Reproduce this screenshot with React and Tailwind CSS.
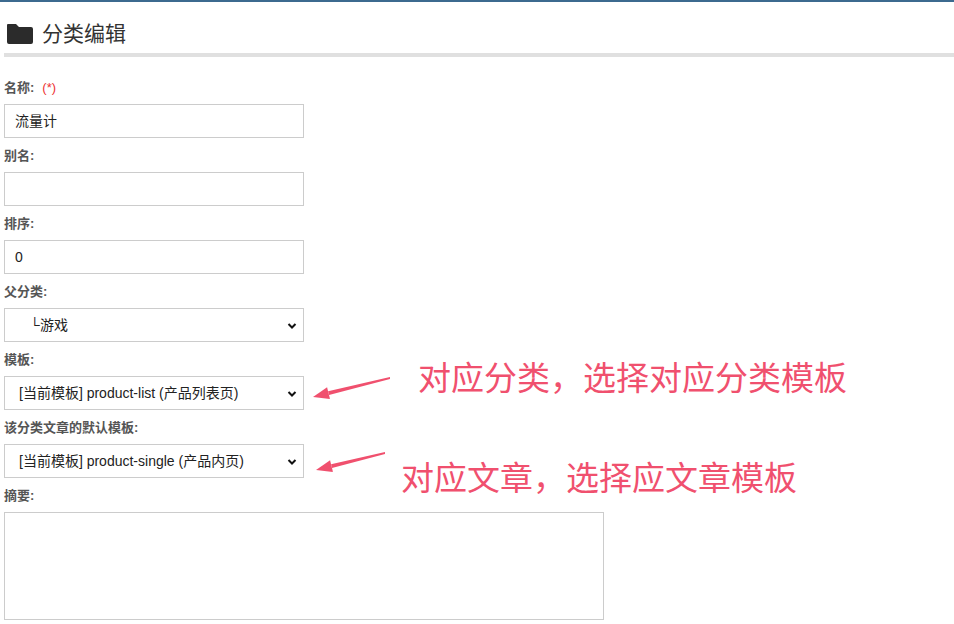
import React from 'react';

const font = { fontFamily: '"Liberation Sans","Noto Sans CJK SC",sans-serif' };

const Label = ({ children, req }) => (
  <div className="h-[16px] text-[13px] font-bold text-[#555] leading-[16px] mb-[8px]">
    {children}
    {req && <span className="font-normal text-[#e33] ml-[8px]">(*)</span>}
  </div>
);

const Chevron = () => (
  <svg className="absolute right-[6px] top-[12px]" width="10" height="10" viewBox="0 0 10 10">
    <path d="M1.5 3 L5 6.5 L8.5 3" fill="none" stroke="#111" strokeWidth="2" />
  </svg>
);

const Field = ({ label, req, value, select, indent }) => (
  <div className="mb-[10px]">
    <Label req={req}>{label}</Label>
    <div className="relative w-[300px] h-[34px] border border-[#ccc] bg-white flex items-center text-[14px] text-[#222]">
      <span className={select ? (indent ? 'pl-[25px]' : 'pl-[14px]') : 'pl-[10px]'}>{value}</span>
      {select && <Chevron />}
    </div>
  </div>
);

const Arrow = ({ x1, y1, x2, y2 }) => {
  const a = Math.atan2(y2 - y1, x2 - x1);
  const L = 16, W = 6;
  const bx = x2 - L * Math.cos(a), by = y2 - L * Math.sin(a);
  const px = -Math.sin(a) * W, py = Math.cos(a) * W;
  return (
    <g fill="#f0506e">
      <polygon points={`${x1},${y1 - 1} ${bx + px / 3},${by + py / 3} ${bx - px / 3},${by - py / 3} ${x1},${y1 + 1}`} />
      <polygon points={`${x2},${y2} ${bx + px},${by + py} ${bx - px},${by - py}`} />
    </g>
  );
};

export default function App() {
  return (
    <div className="relative w-[954px] h-[624px] bg-white overflow-hidden" style={font}>
      <div className="h-[2px] bg-[#3c6a8f]" />
      <div className="flex items-center gap-[8px] pl-[6px] h-[51px] pt-[12px]">
        <svg width="28" height="22" viewBox="0 0 28 22">
          <path d="M2 1 H10 L13 4 H25 Q27 4 27 6 V19 Q27 21 25 21 H3 Q1 21 1 19 V2 Q1 1 2 1 Z" fill="#2b2b2b" />
        </svg>
        <span className="text-[21px] text-[#333]">分类编辑</span>
      </div>
      <div className="ml-[4px] h-[4px] bg-[#e0e0e0]" />
      <div className="pl-[4px] pt-[23px]">
        <Field label="名称:" req value="流量计" />
        <Field label="别名:" value="" />
        <Field label="排序:" value="0" />
        <Field label="父分类:" value="└游戏" select indent />
        <Field label="模板:" value="[当前模板] product-list (产品列表页)" select />
        <Field label="该分类文章的默认模板:" value="[当前模板] product-single (产品内页)" select />
        <Label>摘要:</Label>
        <div className="w-[600px] h-[108px] border border-[#ccc]" />
      </div>
      <svg className="absolute left-0 top-0" width="954" height="624">
        <Arrow x1={390} y1={378} x2={313} y2={397} />
        <Arrow x1={385} y1={453} x2={316} y2={470} />
      </svg>
      <div className="absolute left-[418px] top-[359px] text-[33px] text-[#f0506e] leading-[40px]">对应分类，选择对应分类模板</div>
      <div className="absolute left-[401px] top-[459px] text-[33px] text-[#f0506e] leading-[40px]">对应文章，选择应文章模板</div>
    </div>
  );
}
